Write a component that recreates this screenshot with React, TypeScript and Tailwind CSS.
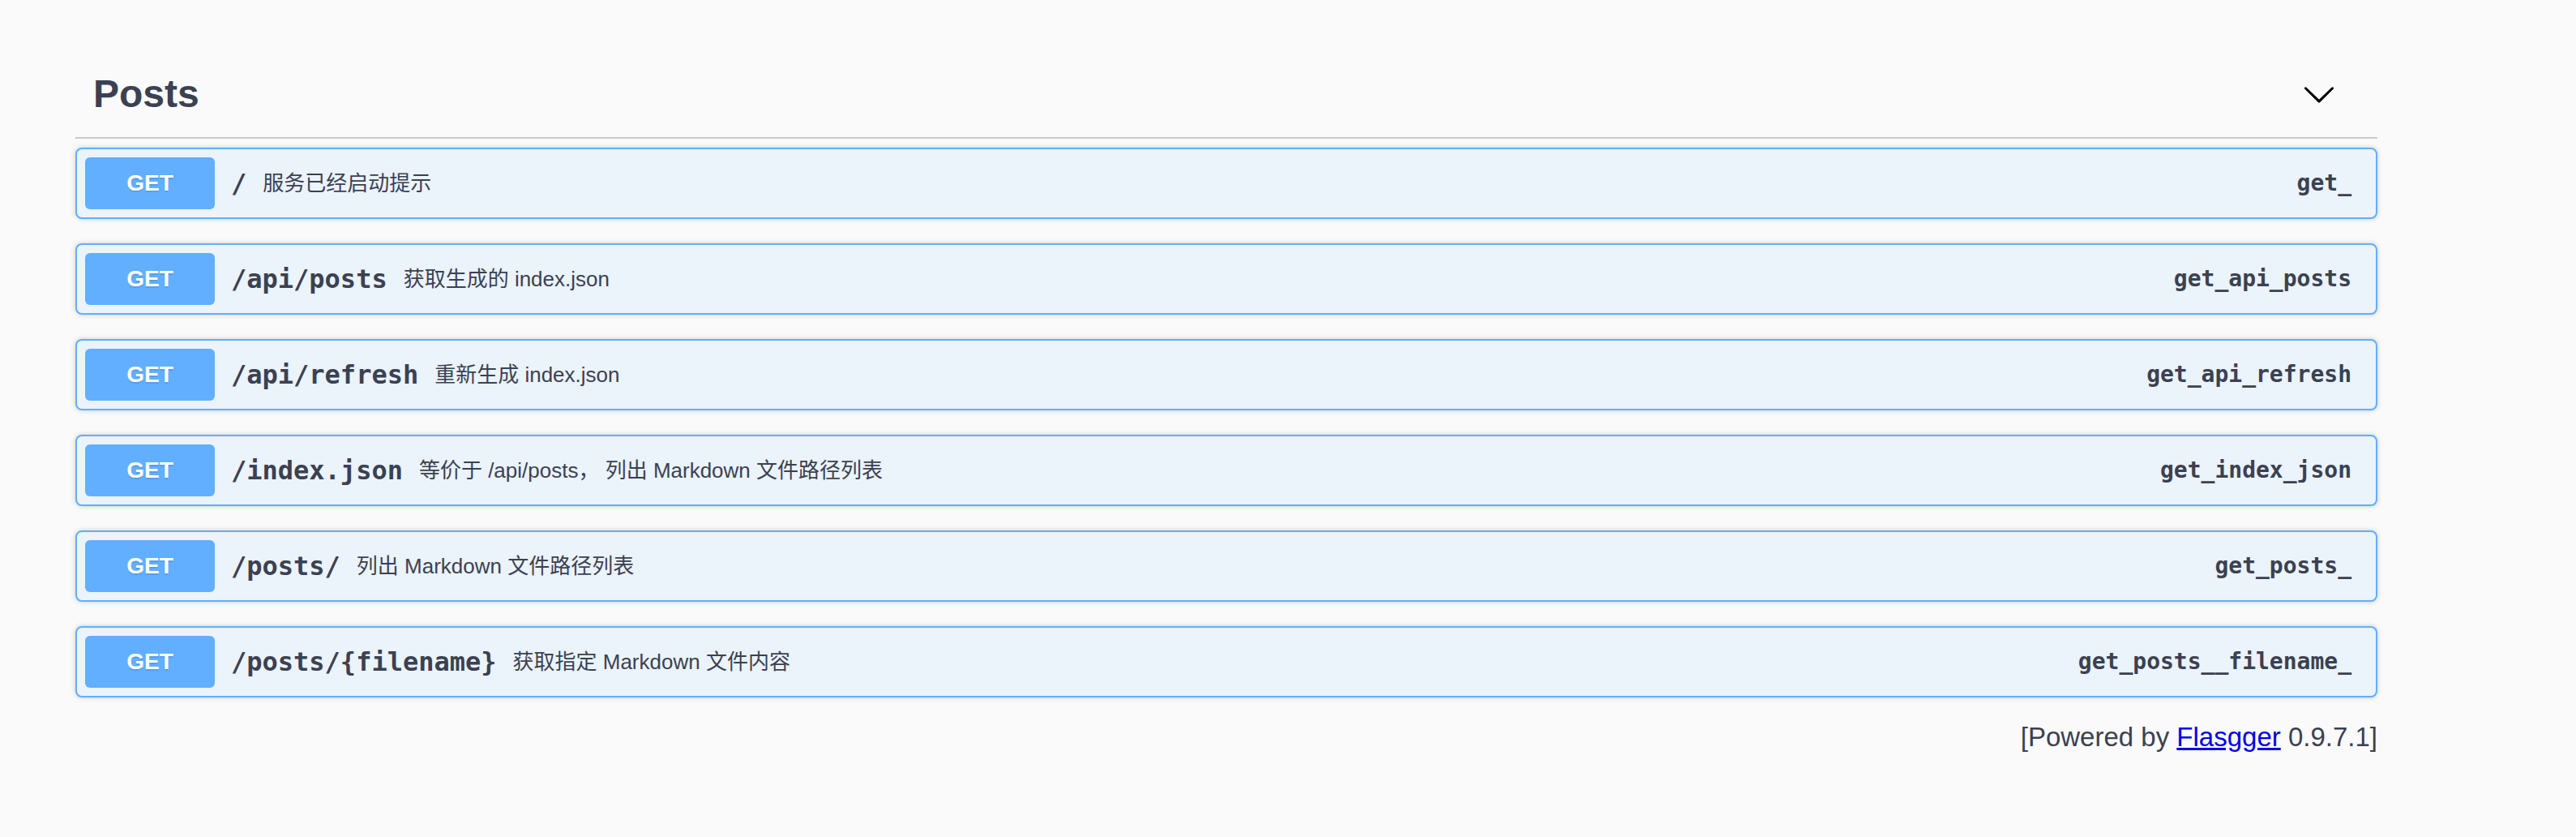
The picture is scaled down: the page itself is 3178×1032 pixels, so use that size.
import React from 'react'

const ops = [
  { path: '/', desc: '服务已经启动提示', id: 'get_' },
  { path: '/api/posts', desc: '获取生成的 index.json', id: 'get_api_posts' },
  { path: '/api/refresh', desc: '重新生成 index.json', id: 'get_api_refresh' },
  { path: '/index.json', desc: '等价于 /api/posts， 列出 Markdown 文件路径列表', id: 'get_index_json' },
  { path: '/posts/', desc: '列出 Markdown 文件路径列表', id: 'get_posts_' },
  { path: '/posts/{filename}', desc: '获取指定 Markdown 文件内容', id: 'get_posts__filename_' },
]

const sans = "font-['Liberation_Sans','Noto_Sans_CJK_SC',sans-serif]"
const mono = "font-['DejaVu_Sans_Mono',monospace]"

export default function App() {
  return (
    <div className={`min-h-screen bg-[#fafafa] pt-[62px] text-[#3b4151] ${sans}`}>
      <div className="ml-[93px] w-[2840px]">
        <div className="flex h-[109px] items-center justify-between border-b-2 border-[#c9cacd] pl-[22px] pr-[51px] mb-[11px]">
          <h3 className="text-[48px] font-bold">Posts</h3>
          <svg width="42" height="42" viewBox="0 0 20 20" className="text-black">
            <path
              fill="currentColor"
              d="M17.418 6.109c.272-.268.709-.268.979 0s.271.701 0 .969l-7.908 7.83c-.27.268-.707.268-.979 0l-7.908-7.83c-.27-.268-.27-.701 0-.969.271-.268.709-.268.979 0L10 13.25l7.418-7.141z"
            />
          </svg>
        </div>

        {ops.map((op) => (
          <div
            key={op.id}
            className="mb-[30px] flex h-[88px] items-center rounded-[8px] border-2 border-[#61affe] bg-[#ebf3fb] pl-[10px] pr-[30px] shadow-[0_0_6px_rgba(0,0,0,0.19)]"
          >
            <span className="flex h-[64px] w-[160px] shrink-0 items-center justify-center rounded-[6px] bg-[#61affe] text-[28px] font-bold text-white [text-shadow:0_2px_0_rgba(0,0,0,0.1)]">
              GET
            </span>
            <span className={`px-[20px] text-[32px] font-bold ${mono}`}>{op.path}</span>
            <span className="text-[26px]">{op.desc}</span>
            <span className={`ml-auto text-[28px] font-bold ${mono}`}>{op.id}</span>
          </div>
        ))}

        <div className="mt-[4px] text-right text-[33px] leading-[37px]">
          [Powered by{' '}
          <a href="#" className="text-[#0000ee] underline">
            Flasgger
          </a>{' '}
          0.9.7.1]
        </div>
      </div>
    </div>
  )
}
